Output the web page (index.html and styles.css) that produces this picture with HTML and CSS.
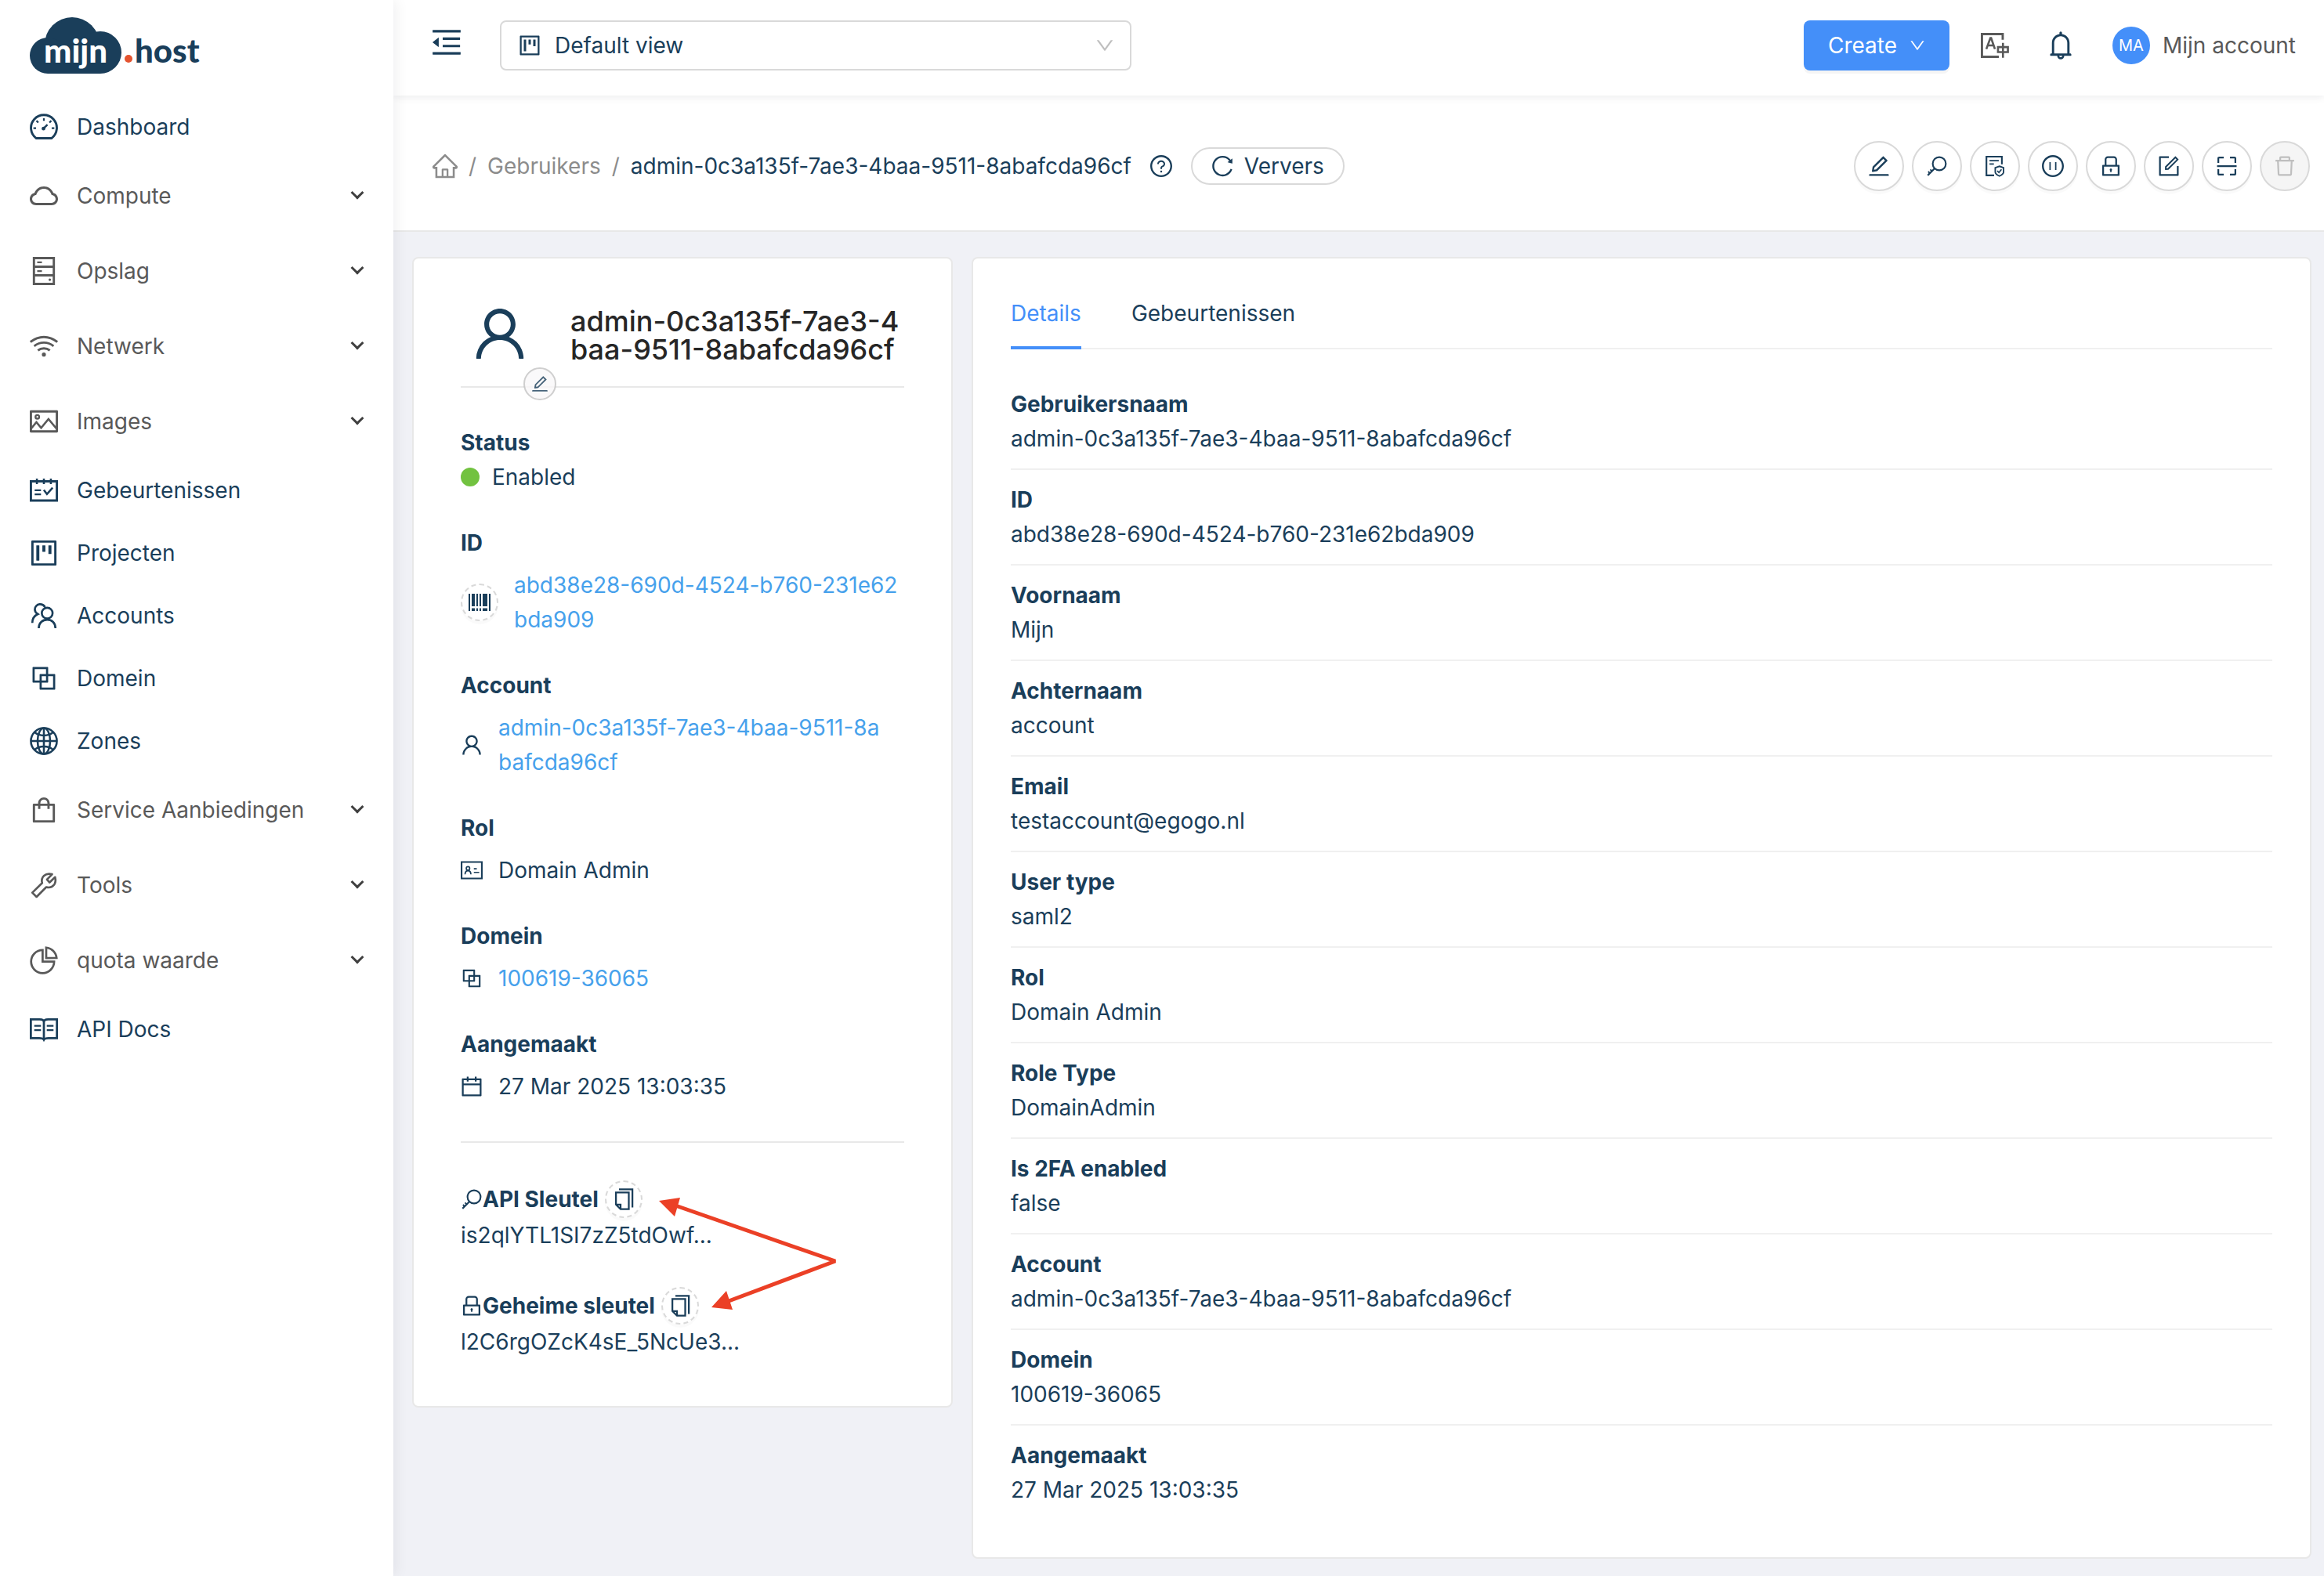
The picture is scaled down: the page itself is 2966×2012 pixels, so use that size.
FILE: index.html
```html
<!DOCTYPE html>
<html lang="nl">

<head>
    <meta charset="UTF-8">
    <meta name="viewport" content="width=device-width, initial-scale=1.0">
    <title>mijn.host - Gebruikers</title>
    <link rel="stylesheet" href="styles.css">
</head>

<body>
    <!-- icon sprite -->
    <svg class="sprite" aria-hidden="true">
        <symbol id="i-down" viewBox="64 64 896 896"><path d="M884 256h-75c-5.1 0-9.9 2.5-12.9 6.6L512 654.2 227.9 262.6c-3-4.1-7.8-6.6-12.9-6.6h-75c-6.5 0-10.3 7.4-6.5 12.7l352.6 486.1c12.8 17.6 39 17.6 51.7 0l352.6-486.1c3.9-5.3.1-12.7-6.4-12.7z"/></symbol>
        <symbol id="i-user" viewBox="64 64 896 896"><path d="M858.5 763.6a374 374 0 00-80.6-119.5 375.63 375.63 0 00-119.5-80.6c-.4-.2-.8-.3-1.2-.5C719.5 518 760 444.7 760 362c0-137-111-248-248-248S264 225 264 362c0 82.7 40.5 156 102.8 201.1-.4.2-.8.3-1.2.5-44.8 18.9-85 46-119.5 80.6a375.63 375.63 0 00-80.6 119.5A371.7 371.7 0 00136 901.8a8 8 0 008 8.2h60c4.4 0 7.9-3.5 8-7.8 2-77.2 33-149.5 87.8-204.3 56.7-56.7 132-87.9 212.2-87.9s155.5 31.2 212.2 87.9C779 752.7 810 825 812 902.2c.1 4.4 3.6 7.8 8 7.8h60a8 8 0 008-8.2c-1-47.8-10.9-94.3-29.5-138.2zM512 534c-45.9 0-89.1-17.9-121.6-50.4S340 407.9 340 362c0-45.9 17.9-89.1 50.4-121.6S466.1 190 512 190s89.1 17.9 121.6 50.4S684 316.1 684 362c0 45.9-17.9 89.1-50.4 121.6S557.9 534 512 534z"/></symbol>
        <symbol id="i-edit" viewBox="64 64 896 896"><path d="M257.7 752c2 0 4-.2 6-.5L431.9 722c2-.4 3.9-1.3 5.3-2.8l423.9-423.9a9.96 9.96 0 000-14.1L694.9 114.9c-1.9-1.9-4.4-2.9-7.1-2.9s-5.2 1-7.1 2.9L256.8 538.8c-1.5 1.5-2.4 3.3-2.8 5.3l-29.5 168.2a33.5 33.5 0 009.4 29.8c6.6 6.4 14.9 9.9 23.8 9.9zm67.4-174.4L687.8 215l73.3 73.3-362.7 362.6-88.9 15.7 15.6-89zM880 836H144c-17.7 0-32 14.3-32 32v36c0 4.4 3.6 8 8 8h784c4.4 0 8-3.6 8-8v-36c0-17.7-14.3-32-32-32z"/></symbol>
        <symbol id="i-project" viewBox="64 64 896 896"><path d="M280 752h80c4.4 0 8-3.6 8-8V280c0-4.4-3.6-8-8-8h-80c-4.4 0-8 3.6-8 8v464c0 4.4 3.6 8 8 8zm192-280h80c4.4 0 8-3.6 8-8V280c0-4.4-3.6-8-8-8h-80c-4.4 0-8 3.6-8 8v184c0 4.4 3.6 8 8 8zm192 72h80c4.4 0 8-3.6 8-8V280c0-4.4-3.6-8-8-8h-80c-4.4 0-8 3.6-8 8v256c0 4.4 3.6 8 8 8zm216-432H144c-17.7 0-32 14.3-32 32v736c0 17.7 14.3 32 32 32h736c17.7 0 32-14.3 32-32V144c0-17.7-14.3-32-32-32zm-40 728H184V184h656v656z"/></symbol>
        <symbol id="i-cloud" viewBox="64 64 896 896"><path d="M811.4 418.7C765.6 297.9 648.9 212 512.2 212S258.8 297.8 213 418.6C127.3 441.1 64 519.1 64 612c0 110.5 89.5 200 199.9 200h496.2C870.5 812 960 722.5 960 612c0-92.7-63.1-170.7-148.6-193.3zm36.3 281a123.07 123.07 0 01-87.6 36.3H263.9c-33.1 0-64.2-12.9-87.6-36.3A123.3 123.3 0 01140 612c0-28 9.1-54.3 26.2-76.3a125.7 125.7 0 0166.1-43.7l37.9-9.9 13.9-36.6c8.6-22.8 20.6-44.1 35.7-63.4a245.6 245.6 0 0152.4-49.9c41.1-28.9 89.5-44.2 140-44.2s98.9 15.3 140 44.2c19.9 14 37.5 30.8 52.4 49.9 15.1 19.3 27.1 40.7 35.7 63.4l13.8 36.5 37.8 10c54.3 14.5 92.1 63.8 92.1 120 0 33.1-12.9 64.3-36.3 87.7z"/></symbol>
        <symbol id="i-lock" viewBox="64 64 896 896"><path d="M832 464h-68V240c0-70.7-57.3-128-128-128H388c-70.7 0-128 57.3-128 128v224h-68c-17.7 0-32 14.3-32 32v384c0 17.7 14.3 32 32 32h640c17.7 0 32-14.3 32-32V496c0-17.7-14.3-32-32-32zM332 240c0-30.9 25.1-56 56-56h248c30.9 0 56 25.1 56 56v224H332V240zm460 600H232V536h560v304zM484 701v53c0 4.4 3.6 8 8 8h40c4.4 0 8-3.6 8-8v-53a48.01 48.01 0 10-56 0z"/></symbol>
        <symbol id="i-delete" viewBox="64 64 896 896"><path d="M360 184h-8c4.4 0 8-3.6 8-8v8h304v-8c0 4.4 3.6 8 8 8h-8v72h72v-80c0-35.3-28.7-64-64-64H352c-35.3 0-64 28.7-64 64v80h72v-72zm504 72H160c-17.7 0-32 14.3-32 32v32c0 4.4 3.6 8 8 8h60.4l24.7 523c1.6 34.1 29.8 61 63.9 61h454c34.2 0 62.3-26.8 63.9-61l24.7-523H888c4.4 0 8-3.6 8-8v-32c0-17.7-14.3-32-32-32zM731.3 840H292.7l-24.2-512h487l-24.2 512z"/></symbol>
        <symbol id="i-bell" viewBox="64 64 896 896"><path d="M816 768h-24V428c0-141.1-104.3-257.7-240-277.1V112c0-22.1-17.9-40-40-40s-40 17.9-40 40v38.9c-135.7 19.4-240 136-240 277.1v340h-24c-17.7 0-32 14.3-32 32v32c0 4.4 3.6 8 8 8h216c0 61.8 50.2 112 112 112s112-50.2 112-112h216c4.4 0 8-3.6 8-8v-32c0-17.7-14.3-32-32-32zM512 888c-26.5 0-48-21.5-48-48h96c0 26.5-21.5 48-48 48zM304 768V428c0-55.6 21.6-107.8 60.9-147.1S456.4 220 512 220c55.6 0 107.8 21.6 147.1 60.9S720 372.4 720 428v340H304z"/></symbol>
        <symbol id="i-home" viewBox="64 64 896 896"><path d="M946.5 505L560.1 118.8l-25.9-25.9a31.5 31.5 0 00-44.4 0L77.5 505a63.9 63.9 0 00-18.8 46c.4 35.2 29.7 63.3 64.9 63.3h42.5V940h691.8V614.3h43.4c17.1 0 33.2-6.7 45.3-18.8a63.6 63.6 0 0018.7-45.3c0-17-6.7-33.1-18.8-45.2zM568 868H456V664h112v204zm217.9-325.7V868H632V640c0-22.1-17.9-40-40-40H432c-22.1 0-40 17.9-40 40v228H238.1V542.3h-96l370-369.7 23.1 23.1L882 542.3h-96.1z"/></symbol>
        <symbol id="i-calendar" viewBox="64 64 896 896"><path d="M880 184H712v-64c0-4.4-3.6-8-8-8h-56c-4.4 0-8 3.6-8 8v64H384v-64c0-4.4-3.6-8-8-8h-56c-4.4 0-8 3.6-8 8v64H144c-17.7 0-32 14.3-32 32v664c0 17.7 14.3 32 32 32h736c17.7 0 32-14.3 32-32V216c0-17.7-14.3-32-32-32zm-40 656H184V460h656v380zM184 392V256h128v48c0 4.4 3.6 8 8 8h56c4.4 0 8-3.6 8-8v-48h256v48c0 4.4 3.6 8 8 8h56c4.4 0 8-3.6 8-8v-48h128v136H184z"/></symbol>
        <symbol id="i-block" viewBox="64 64 896 896"><path d="M856 376H648V168c0-8.8-7.2-16-16-16H168c-8.8 0-16 7.2-16 16v464c0 8.8 7.2 16 16 16h208v208c0 8.8 7.2 16 16 16h464c8.8 0 16-7.2 16-16V392c0-8.8-7.2-16-16-16zm-480 16v188H220V220h360v156H392c-8.8 0-16 7.2-16 16zm204 52v136H444V444h136zm224 360H444V648h188c8.8 0 16-7.2 16-16V444h156v360z"/></symbol>
        <symbol id="i-shopping" viewBox="64 64 896 896"><path d="M832 312H696v-16c0-101.6-82.4-184-184-184s-184 82.4-184 184v16H192c-17.7 0-32 14.3-32 32v536c0 17.7 14.3 32 32 32h640c17.7 0 32-14.3 32-32V344c0-17.7-14.3-32-32-32zm-432-16c0-61.9 50.1-112 112-112s112 50.1 112 112v16H400v-16zm392 544H232V384h96v88c0 4.4 3.6 8 8 8h56c4.4 0 8-3.6 8-8v-88h224v88c0 4.4 3.6 8 8 8h56c4.4 0 8-3.6 8-8v-88h96v456z"/></symbol>
        <symbol id="i-question" viewBox="64 64 896 896"><path d="M512 64C264.6 64 64 264.6 64 512s200.6 448 448 448 448-200.6 448-448S759.4 64 512 64zm0 820c-205.4 0-372-166.6-372-372s166.6-372 372-372 372 166.6 372 372-166.6 372-372 372z"/><path d="M623.6 316.7C593.6 290.4 554 276 512 276s-81.6 14.5-111.6 40.7C369.2 344 352 380.7 352 420v7.6c0 4.4 3.6 8 8 8h48c4.4 0 8-3.6 8-8V420c0-44.1 43.1-80 96-80s96 35.9 96 80c0 31.1-22 59.6-56.1 72.7-21.2 8.1-39.2 22.3-52.1 40.9-13.1 19-19.9 41.8-19.9 64.9V620c0 4.4 3.6 8 8 8h48c4.4 0 8-3.6 8-8v-22.7a48.3 48.3 0 0130.9-44.8c59-22.7 97.1-74.7 97.1-132.5.1-39.3-17.1-76-48.3-103.3zM472 732a40 40 0 1080 0 40 40 0 10-80 0z"/></symbol>
        <symbol id="i-pause" viewBox="64 64 896 896"><path d="M512 64C264.6 64 64 264.6 64 512s200.6 448 448 448 448-200.6 448-448S759.4 64 512 64zm0 820c-205.4 0-372-166.6-372-372s166.6-372 372-372 372 166.6 372 372-166.6 372-372 372zM368 352h56v320h-56zM600 352h56v320h-56z"/></symbol>
        <symbol id="i-reload" viewBox="64 64 896 896"><path d="M909.1 209.3l-56.4 44.1C775.8 155.1 656.2 92 521.9 92 290 92 102.3 279.5 102 511.5 101.7 743.7 289.8 932 521.9 932c181.3 0 335.8-115 394.6-276.1 1.5-4.2-.7-8.9-4.9-10.3l-56.7-19.5a8 8 0 00-10.1 4.8c-1.8 5-3.8 10-5.9 14.9-17.3 41-42.1 77.8-73.7 109.4A344.77 344.77 0 01655.9 829c-42.3 17.9-87.4 27-133.8 27-46.5 0-91.5-9.1-133.8-27A341.5 341.5 0 01279 755.2a342.16 342.16 0 01-73.7-109.4c-17.9-42.4-27-87.4-27-133.9s9.1-91.5 27-133.9c17.3-41 42.1-77.8 73.7-109.4 31.6-31.6 68.4-56.4 109.3-73.8 42.3-17.9 87.4-27 133.8-27 46.5 0 91.5 9.1 133.8 27a341.5 341.5 0 01109.3 73.8c9.9 9.9 19.2 20.4 27.8 31.4l-60.2 47a8 8 0 003 14.1l175.6 43c5 1.2 9.9-2.6 9.9-7.7l.8-180.9c-.1-6.6-7.8-10.3-13-6.2z"/></symbol>
        <symbol id="i-scan" viewBox="64 64 896 896"><path d="M136 384h56c4.4 0 8-3.6 8-8V200h176c4.4 0 8-3.6 8-8v-56c0-4.4-3.6-8-8-8H196c-37.6 0-68 30.4-68 68v180c0 4.4 3.6 8 8 8zm512-184h176v176c0 4.4 3.6 8 8 8h56c4.4 0 8-3.6 8-8V196c0-37.6-30.4-68-68-68H648c-4.4 0-8 3.6-8 8v56c0 4.4 3.6 8 8 8zM376 824H200V648c0-4.4-3.6-8-8-8h-56c-4.4 0-8 3.6-8 8v180c0 37.6 30.4 68 68 68h180c4.4 0 8-3.6 8-8v-56c0-4.4-3.6-8-8-8zm512-184h-56c-4.4 0-8 3.6-8 8v176H648c-4.4 0-8 3.6-8 8v56c0 4.4 3.6 8 8 8h180c37.6 0 68-30.4 68-68V648c0-4.4-3.6-8-8-8zm16-164H120c-4.4 0-8 3.6-8 8v56c0 4.4 3.6 8 8 8h784c4.4 0 8-3.6 8-8v-56c0-4.4-3.6-8-8-8z"/></symbol>
        <symbol id="i-form" viewBox="64 64 896 896"><path d="M904 512h-56c-4.4 0-8 3.6-8 8v320H184V184h320c4.4 0 8-3.6 8-8v-56c0-4.4-3.6-8-8-8H144c-17.7 0-32 14.3-32 32v736c0 17.7 14.3 32 32 32h736c17.7 0 32-14.3 32-32V520c0-4.4-3.6-8-8-8z"/><path d="M355.9 534.9L354 653.8c-.1 8.9 7.1 16.2 16 16.2h.4l118-2.9c2-.1 4-.9 5.4-2.3l415.9-415c3.1-3.1 3.1-8.2 0-11.3L785.4 114.3c-1.6-1.6-3.6-2.3-5.7-2.3s-4.1.8-5.7 2.3l-415.8 415a8.3 8.3 0 00-2.3 5.6zm63.5 23.6L779.7 199l45.2 45.1-360.5 359.7-45.7 1.1.7-46.4z"/></symbol>
        <symbol id="i-picture" viewBox="64 64 896 896"><path d="M928 160H96c-17.7 0-32 14.3-32 32v640c0 17.7 14.3 32 32 32h832c17.7 0 32-14.3 32-32V192c0-17.7-14.3-32-32-32zm-40 632H136v-39.9l138.5-164.3 150.1 178L658.1 489 888 761.6V792zm0-129.8L664.2 396.8c-3.2-3.8-9-3.8-12.2 0L424.6 666.4l-144-170.7c-3.2-3.8-9-3.8-12.2 0L136 652.7V232h752v430.2zM304 456a88 88 0 100-176 88 88 0 000 176zm0-116c15.5 0 28 12.5 28 28s-12.5 28-28 28-28-12.5-28-28 12.5-28 28-28z"/></symbol>
        <symbol id="i-pie" viewBox="64 64 896 896"><path d="M864 518H506V160c0-4.4-3.6-8-8-8h-26a398.46 398.46 0 00-282.8 117.1 398.19 398.19 0 00-85.7 127.1A397.61 397.61 0 0072 552a398.46 398.46 0 00117.1 282.8c36.7 36.7 79.5 65.6 127.1 85.7A397.61 397.61 0 00472 952a398.46 398.46 0 00282.8-117.1c36.7-36.7 65.6-79.5 85.7-127.1A397.61 397.61 0 00872 552v-26c0-4.4-3.6-8-8-8zM705.7 787.8A331.59 331.59 0 01470.4 884c-88.1-.4-170.9-34.9-233.2-97.2C174.5 724.1 140 640.7 140 552c0-88.7 34.5-172.1 97.2-234.8 54.6-54.6 124.9-87.9 200.8-95.5V586h364.3c-7.7 76.3-41.3 147-96.6 201.8zM952 462.4l-2.6-28.2c-8.5-92.1-49.4-179-115.2-244.6A399.4 399.4 0 00589 74.6L560.7 72c-4.7-.4-8.7 3.2-8.7 7.9V464c0 4.4 3.6 8 8 8l384-1c4.7 0 8.4-4 8-8.6zm-332.2-58.2V147.6a332.24 332.24 0 01166.4 89.8c45.7 45.6 77 103.6 90 166.1l-256.4.7z"/></symbol>
        <symbol id="i-fold" viewBox="64 64 896 896"><path d="M408 442h480c4.4 0 8-3.6 8-8v-56c0-4.4-3.6-8-8-8H408c-4.4 0-8 3.6-8 8v56c0 4.4 3.6 8 8 8zm-8 204c0 4.4 3.6 8 8 8h480c4.4 0 8-3.6 8-8v-56c0-4.4-3.6-8-8-8H408c-4.4 0-8 3.6-8 8v56zm504-486H120c-4.4 0-8 3.6-8 8v56c0 4.4 3.6 8 8 8h784c4.4 0 8-3.6 8-8v-56c0-4.4-3.6-8-8-8zm0 632H120c-4.4 0-8 3.6-8 8v56c0 4.4 3.6 8 8 8h784c4.4 0 8-3.6 8-8v-56c0-4.4-3.6-8-8-8zM115.4 518.9L271.7 642c5.8 4.6 14.4.5 14.4-6.9V388.9c0-7.4-8.5-11.5-14.4-6.9L115.4 505.1a8.74 8.74 0 000 13.8z"/></symbol>
        <symbol id="i-dashboard" viewBox="64 64 896 896"><g fill="none" stroke="currentColor" stroke-width="72"><path d="M270 874A410 410 0 1 1 754 874Z" stroke-linejoin="round"/><path d="M512 236v84M180 552h84M760 552h84M276 316l60 60M748 316l-60 60" stroke-width="56"/><path d="M505 560l120-118" stroke-width="60"/></g><circle cx="500" cy="566" r="58"/></symbol>
        <symbol id="i-hdd" viewBox="64 64 896 896"><g fill="none" stroke="currentColor" stroke-width="72"><path d="M196 100H828V924H196ZM196 374H828M196 650H828"/><path d="M300 237H450M300 512H450" stroke-width="56"/></g><circle cx="700" cy="787" r="40"/></symbol>
        <symbol id="i-wifi" viewBox="64 64 896 896"><g fill="none" stroke="currentColor" stroke-width="72"><path d="M84 376Q280 218 512 218T940 376M204 508Q340 398 512 398T820 508M322 648Q404 580 512 580T702 648"/></g><circle cx="512" cy="778" r="64"/></symbol>
        <symbol id="i-schedule" viewBox="64 64 896 896"><g fill="none" stroke="currentColor" stroke-width="72"><path d="M100 226H924V834H100Z"/><path d="M290 140V314M512 140V314M734 140V314" stroke-width="64"/><path d="M220 508H420M220 640H420" stroke-width="56"/><path d="M510 500L610 630 790 430" stroke-width="64"/></g></symbol>
        <symbol id="i-team" viewBox="64 64 896 896"><g fill="none" stroke="currentColor" stroke-width="66"><circle cx="617" cy="432" r="172"/><path d="M348 912C350 740 470 640 617 640S878 740 880 912M550 236C500 160 440 144 376 148C290 156 224 230 224 310C224 384 270 430 320 462C210 510 146 610 144 740"/></g></symbol>
        <symbol id="i-globe" viewBox="64 64 896 896"><g fill="none" stroke="currentColor" stroke-width="64"><circle cx="512" cy="512" r="412"/><ellipse cx="512" cy="512" rx="200" ry="412"/><path d="M512 100V924M100 512H924"/><path d="M220 236C370 370 654 370 804 236M220 788C370 654 654 654 804 788"/></g></symbol>
        <symbol id="i-tool" viewBox="64 64 896 896"><path d="M144 752L458 444C406 250 560 110 774 166L610 336 694 426 868 258C926 470 780 630 588 574L280 884Z" fill="none" stroke="currentColor" stroke-width="66" stroke-linejoin="round"/></symbol>
        <symbol id="i-read" viewBox="64 64 896 896"><g fill="none" stroke="currentColor" stroke-width="68"><path d="M98 196H380Q512 196 512 280 512 196 644 196H926V796H660Q540 796 512 846 484 796 364 796H98ZM512 270V830"/><path d="M206 400H420M206 540H420M604 400H818M604 540H818" stroke-width="56"/></g></symbol>
        <symbol id="i-key" viewBox="64 64 896 896"><g fill="none" stroke="currentColor" stroke-width="68"><circle cx="608" cy="416" r="268"/><path d="M420 608L136 892"/><path d="M240 650L314 724M156 736L230 810" stroke-width="60"/></g></symbol>
        <symbol id="i-audit" viewBox="64 64 896 896"><g fill="none" stroke="currentColor" stroke-width="68"><path d="M480 890H166V126H796V440"/><path d="M290 290H670M290 430H470" stroke-width="54"/><path d="M696 520L866 580V756Q866 836 696 920 526 836 526 756V580Z" stroke-width="60"/><path d="M610 710L676 776 780 650" stroke-width="54"/></g></symbol>
        <symbol id="i-translate" viewBox="64 64 896 896"><g fill="none" stroke="currentColor" stroke-width="72"><path d="M636 874H100V150H760V330"/><path d="M240 628L368 276H392L512 628M284 512H470" stroke-width="66"/><path d="M610 564H924V724H610ZM768 430V904" stroke-width="66"/></g></symbol>
        <symbol id="i-idcard" viewBox="64 64 896 896"><g fill="none" stroke="currentColor" stroke-width="68"><path d="M98 176H926V848H98Z"/><circle cx="360" cy="436" r="70" stroke-width="54"/><path d="M240 680C244 580 290 530 360 530S476 580 480 680M600 450H720M600 600H820" stroke-width="54"/></g></symbol>
        <symbol id="i-barcode" viewBox="64 64 896 896"><path d="M64 160h64v704H64zM192 160h128v512H192zM384 160h64v512h-64zM512 160h64v512h-64zM640 160h192v512H640zM896 160h64v704h-64zM192 752h128v112H192zM384 752h64v112h-64zM512 752h64v112h-64zM640 752h192v112H640z"/></symbol>
        <symbol id="i-copy" viewBox="64 64 896 896"><g fill="none" stroke="currentColor" stroke-width="72"><path d="M196 236H720V918H384L196 730ZM196 730H384V918M320 108H868V850"/></g></symbol>
    </svg>

    <div class="layout">
        <aside class="sidebar">
            <a class="logo" href="#" aria-label="mijn.host">
                <svg width="220" height="76" viewBox="0 0 220 76">
                    <g fill="#1a3e5a">
                        <circle cx="54" cy="37" r="35"/>
                        <circle cx="90" cy="47" r="27"/>
                        <circle cx="23" cy="51" r="23"/>
                        <path d="M23 40H90V74H23z"/>
                    </g>
                    <circle cx="126" cy="55" r="5" fill="#e4532f"/>
                    <text class="logo-text" x="18" y="60" fill="#fff">mijn</text>
                    <text class="logo-text" x="134" y="60" fill="#1a3e5a">host</text>
                </svg>
            </a>
            <nav class="menu">
                <a class="menu-item" href="#"><svg class="icon"><use href="#i-dashboard"/></svg>Dashboard</a>
                <button class="menu-item submenu"><svg class="icon"><use href="#i-cloud"/></svg>Compute<span class="chevron"></span></button>
                <button class="menu-item submenu"><svg class="icon"><use href="#i-hdd"/></svg>Opslag<span class="chevron"></span></button>
                <button class="menu-item submenu"><svg class="icon"><use href="#i-wifi"/></svg>Netwerk<span class="chevron"></span></button>
                <button class="menu-item submenu"><svg class="icon"><use href="#i-picture"/></svg>Images<span class="chevron"></span></button>
                <a class="menu-item" href="#"><svg class="icon"><use href="#i-schedule"/></svg>Gebeurtenissen</a>
                <a class="menu-item" href="#"><svg class="icon"><use href="#i-project"/></svg>Projecten</a>
                <a class="menu-item" href="#"><svg class="icon"><use href="#i-team"/></svg>Accounts</a>
                <a class="menu-item" href="#"><svg class="icon"><use href="#i-block"/></svg>Domein</a>
                <a class="menu-item" href="#"><svg class="icon"><use href="#i-globe"/></svg>Zones</a>
                <button class="menu-item submenu"><svg class="icon"><use href="#i-shopping"/></svg>Service Aanbiedingen<span class="chevron"></span></button>
                <button class="menu-item submenu"><svg class="icon"><use href="#i-tool"/></svg>Tools<span class="chevron"></span></button>
                <button class="menu-item submenu"><svg class="icon"><use href="#i-pie"/></svg>quota waarde<span class="chevron"></span></button>
                <a class="menu-item" href="#"><svg class="icon"><use href="#i-read"/></svg>API Docs</a>
            </nav>
        </aside>

        <div class="main">
            <header class="header">
                <button class="icon-button fold" aria-label="Menu inklappen"><svg class="icon"><use href="#i-fold"/></svg></button>
                <div class="view-select">
                    <svg class="icon"><use href="#i-project"/></svg>
                    <select aria-label="Project">
                        <option>Default view</option>
                    </select>
                    <svg class="icon arrow"><use href="#i-down"/></svg>
                </div>
                <button class="create">Create <svg class="icon"><use href="#i-down"/></svg></button>
                <div class="header-tools">
                    <button class="icon-button translate" aria-label="Taal"><svg class="icon"><use href="#i-translate"/></svg></button>
                    <button class="icon-button" aria-label="Meldingen"><svg class="icon"><use href="#i-bell"/></svg></button>
                    <button class="account"><span class="avatar">MA</span>Mijn account</button>
                </div>
            </header>

            <div class="toolbar">
                <nav class="breadcrumb">
                    <a href="#" aria-label="Home"><svg class="icon home"><use href="#i-home"/></svg></a>
                    <span>/</span>
                    <a href="#">Gebruikers</a>
                    <span>/</span>
                    <span class="current">admin-0c3a135f-7ae3-4baa-9511-8abafcda96cf</span>
                </nav>
                <a class="help" href="#" aria-label="Help"><svg class="icon"><use href="#i-question"/></svg></a>
                <button class="refresh"><svg class="icon"><use href="#i-reload"/></svg>Ververs</button>
                <div class="actions">
                    <button class="round" aria-label="Bewerken"><svg class="icon"><use href="#i-edit"/></svg></button>
                    <button class="round" aria-label="Wachtwoord wijzigen"><svg class="icon"><use href="#i-key"/></svg></button>
                    <button class="round" aria-label="Sleutels genereren"><svg class="icon"><use href="#i-audit"/></svg></button>
                    <button class="round" aria-label="Uitschakelen"><svg class="icon"><use href="#i-pause"/></svg></button>
                    <button class="round" aria-label="Vergrendelen"><svg class="icon"><use href="#i-lock"/></svg></button>
                    <button class="round" aria-label="SAML"><svg class="icon"><use href="#i-form"/></svg></button>
                    <button class="round" aria-label="2FA"><svg class="icon"><use href="#i-scan"/></svg></button>
                    <button class="round" aria-label="Verwijderen" disabled><svg class="icon"><use href="#i-delete"/></svg></button>
                </div>
            </div>

            <main class="content">
                <section class="card info">
                    <div class="info-head">
                        <svg class="icon"><use href="#i-user"/></svg>
                        <h1>admin-0c3a135f-7ae3-4baa-9511-8abafcda96cf</h1>
                        <button class="edit-badge" aria-label="Icoon wijzigen"><svg class="icon"><use href="#i-edit"/></svg></button>
                    </div>

                    <div class="info-item">
                        <h2>Status</h2>
                        <div class="info-value status"><span class="dot"></span>Enabled</div>
                    </div>
                    <div class="info-item">
                        <h2>ID</h2>
                        <div class="info-value spaced barcode">
                            <button class="dashed" aria-label="Barcode"><svg class="icon"><use href="#i-barcode"/></svg></button>
                            <a href="#">abd38e28-690d-4524-b760-231e62<wbr>bda909</a>
                        </div>
                    </div>
                    <div class="info-item">
                        <h2>Account</h2>
                        <div class="info-value spaced">
                            <svg class="icon"><use href="#i-user"/></svg>
                            <a href="#">admin-0c3a135f-7ae3-4baa-9511-8a<wbr>bafcda96cf</a>
                        </div>
                    </div>
                    <div class="info-item">
                        <h2>Rol</h2>
                        <div class="info-value spaced"><svg class="icon"><use href="#i-idcard"/></svg>Domain Admin</div>
                    </div>
                    <div class="info-item">
                        <h2>Domein</h2>
                        <div class="info-value spaced"><svg class="icon"><use href="#i-block"/></svg><a href="#">100619-36065</a></div>
                    </div>
                    <div class="info-item">
                        <h2>Aangemaakt</h2>
                        <div class="info-value spaced"><svg class="icon"><use href="#i-calendar"/></svg>27 Mar 2025 13:03:35</div>
                    </div>

                    <div class="keys">
                        <div class="key">
                            <h2><svg class="icon"><use href="#i-key"/></svg>API Sleutel <button class="dashed" aria-label="Kopieer API sleutel"><svg class="icon"><use href="#i-copy"/></svg></button></h2>
                            <p>is2qlYTL1SI7zZ5tdOwf...</p>
                        </div>
                        <div class="key">
                            <h2><svg class="icon"><use href="#i-lock"/></svg>Geheime sleutel <button class="dashed" aria-label="Kopieer geheime sleutel"><svg class="icon"><use href="#i-copy"/></svg></button></h2>
                            <p>l2C6rgOZcK4sE_5NcUe3...</p>
                        </div>
                        <!-- arrows pointing at the copy buttons -->
                        <svg class="arrows" width="240" height="150" viewBox="0 0 240 150">
                            <path d="M22 12L226 83 90 134" fill="none" stroke="#eb4026" stroke-width="5" stroke-linejoin="bevel"/>
                            <path d="M1 6L28 2 21 26zM68 142L87 121 95 145z" fill="#eb4026"/>
                        </svg>
                    </div>
                </section>

                <section class="card details">
                    <div class="tabs" role="tablist">
                        <button class="tab active" role="tab" aria-selected="true">Details</button>
                        <button class="tab" role="tab" aria-selected="false">Gebeurtenissen</button>
                    </div>
                    <dl class="detail-list">
                        <div><dt>Gebruikersnaam</dt><dd>admin-0c3a135f-7ae3-4baa-9511-8abafcda96cf</dd></div>
                        <div><dt>ID</dt><dd>abd38e28-690d-4524-b760-231e62bda909</dd></div>
                        <div><dt>Voornaam</dt><dd>Mijn</dd></div>
                        <div><dt>Achternaam</dt><dd>account</dd></div>
                        <div><dt>Email</dt><dd>testaccount@egogo.nl</dd></div>
                        <div><dt>User type</dt><dd>saml2</dd></div>
                        <div><dt>Rol</dt><dd>Domain Admin</dd></div>
                        <div><dt>Role Type</dt><dd>DomainAdmin</dd></div>
                        <div><dt>Is 2FA enabled</dt><dd>false</dd></div>
                        <div><dt>Account</dt><dd>admin-0c3a135f-7ae3-4baa-9511-8abafcda96cf</dd></div>
                        <div><dt>Domein</dt><dd>100619-36065</dd></div>
                        <div><dt>Aangemaakt</dt><dd>27 Mar 2025 13:03:35</dd></div>
                    </dl>
                </section>
            </main>
        </div>
    </div>
</body>

</html>
```

FILE: styles.css
```css
* {
    box-sizing: border-box;
}

body {
    margin: 0;
    font-family: Inter, "Liberation Sans", sans-serif;
    font-size: 28px;
    line-height: 44px;
    color: #1a3e5a;
    background-color: #f0f1f6;
}

h1,
h2,
p,
dl,
dd {
    margin: 0;
}

a {
    color: inherit;
    text-decoration: none;
}

button,
select {
    font: inherit;
    color: inherit;
    margin: 0;
    padding: 0;
    border: none;
    background: none;
    cursor: pointer;
}

.sprite {
    position: absolute;
    width: 0;
    height: 0;
}

.icon {
    display: block;
    flex: none;
    width: 28px;
    height: 28px;
    fill: currentColor;
}

.layout {
    display: flex;
    min-height: 100vh;
}

/* Sidebar */
.sidebar {
    position: relative;
    z-index: 1;
    flex: none;
    width: 502px;
    background-color: #fff;
    box-shadow: 4px 0 16px rgba(0, 21, 41, 0.06);
}

.logo {
    display: block;
    height: 122px;
    padding: 20px 38px;
}

.logo svg {
    display: block;
}

.logo-text {
    font-family: Lato, sans-serif;
    font-size: 42px;
    font-weight: 900;
}

.menu {
    display: flex;
    flex-direction: column;
}

.menu-item {
    display: flex;
    align-items: center;
    gap: 24px;
    height: 80px;
    padding: 0 38px;
    text-align: left;
}

.menu-item .icon {
    width: 36px;
    height: 36px;
}

.submenu {
    margin: 8px 0;
    color: #595959;
}

.chevron {
    width: 12px;
    height: 12px;
    margin: 0 2px 8px auto;
    border-right: 3px solid #404040;
    border-bottom: 3px solid #404040;
    transform: rotate(45deg);
}

/* Header */
.main {
    flex: 1;
    min-width: 0;
}

.header {
    position: relative;
    display: flex;
    align-items: center;
    height: 122px;
    padding: 0 36px 6px 48px;
    background-color: #fff;
    box-shadow: 0 2px 10px rgba(0, 21, 41, 0.08);
}

.icon-button .icon {
    width: 36px;
    height: 36px;
}

.fold {
    margin-right: 48px;
    padding-bottom: 8px;
}

.fold .icon {
    width: 40px;
    height: 40px;
}

.view-select {
    display: flex;
    align-items: center;
    gap: 18px;
    width: 806px;
    height: 64px;
    padding: 0 20px 0 22px;
    border: 2px solid #d9d9d9;
    border-radius: 8px;
}

.view-select select {
    flex: 1;
    appearance: none;
    outline: none;
}

.view-select .arrow {
    width: 24px;
    height: 24px;
    color: #bfbfbf;
}

.create {
    display: flex;
    align-items: center;
    justify-content: center;
    gap: 16px;
    width: 186px;
    height: 64px;
    margin-left: auto;
    margin-right: 40px;
    border-radius: 8px;
    color: #fff;
    background-color: #448ff9;
    box-shadow: 0 4px 0 rgba(0, 0, 0, 0.04);
}

.create .icon {
    width: 20px;
    height: 20px;
}

.header-tools {
    display: flex;
    align-items: center;
    gap: 48px;
}

.translate {
    color: #595959;
}

.account {
    display: flex;
    align-items: center;
    gap: 16px;
    color: #595959;
}

.avatar {
    width: 48px;
    height: 48px;
    border-radius: 50%;
    background-color: #448ff9;
    color: #fff;
    font-size: 20px;
    line-height: 48px;
    text-align: center;
}

/* Breadcrumb and actions */
.toolbar {
    display: flex;
    align-items: center;
    padding: 58px 18px 50px 50px;
    border-bottom: 2px solid #e8e8e8;
    background-color: #fff;
}

.breadcrumb {
    display: flex;
    align-items: center;
    gap: 14px;
    color: #8c8c8c;
}

.breadcrumb .home {
    width: 32px;
    height: 32px;
}

.breadcrumb .current {
    color: #1a3e5a;
}

.help {
    margin: 0 24px;
}

.refresh {
    display: flex;
    align-items: center;
    gap: 14px;
    height: 48px;
    padding: 0 24px;
    border: 2px solid #d9d9d9;
    border-radius: 24px;
}

.actions {
    display: flex;
    gap: 10px;
    margin-left: auto;
}

.round {
    display: flex;
    align-items: center;
    justify-content: center;
    width: 64px;
    height: 64px;
    border: 2px solid #d9d9d9;
    border-radius: 50%;
    background-color: #fff;
    box-shadow: 0 4px 0 rgba(0, 0, 0, 0.02);
}

.round:disabled {
    color: #bfbfbf;
    background-color: #f5f5f5;
    box-shadow: none;
    cursor: not-allowed;
}

/* Cards */
.content {
    display: grid;
    grid-template-columns: 7fr 17fr;
    align-items: start;
    padding: 32px 4px 22px 12px;
}

.card {
    min-width: 0;
    margin: 0 12px;
    border: 2px solid #e8e8e8;
    border-radius: 8px;
    background-color: #fff;
}

.info {
    padding: 58px 60px 60px;
}

.info-head {
    position: relative;
    display: flex;
    align-items: center;
    gap: 54px;
    height: 107px;
    margin-bottom: 48px;
    padding: 0 0 30px 14px;
    border-bottom: 2px solid #e8e8e8;
}

.info-head > .icon {
    width: 72px;
    height: 72px;
}

.info-head h1 {
    padding-top: 4px;
    color: #262626;
    font-size: 36px;
    font-weight: 500;
    line-height: 36px;
    word-break: break-all;
}

.edit-badge {
    position: absolute;
    left: 80px;
    bottom: -18px;
    display: flex;
    align-items: center;
    justify-content: center;
    width: 42px;
    height: 42px;
    border: 2px solid #c4c4c4;
    border-radius: 50%;
    background-color: #faf8f9;
    opacity: 0.8;
}

.edit-badge .icon {
    width: 22px;
    height: 22px;
}

.info-item {
    margin-bottom: 40px;
}

h2 {
    font-size: 28px;
    font-weight: 700;
    line-height: 44px;
}

.info-value {
    display: flex;
    align-items: center;
    gap: 20px;
}

.info-value a {
    color: #46a1ec;
}

.spaced {
    margin-top: 10px;
}

.status {
    gap: 16px;
}

.dot {
    width: 24px;
    height: 24px;
    border-radius: 50%;
    background-color: #72c240;
}

.dashed {
    display: flex;
    flex: none;
    align-items: center;
    justify-content: center;
    width: 48px;
    height: 48px;
    border: 2px dashed #d9d9d9;
    border-radius: 50%;
    background-color: #fff;
    box-shadow: 0 4px 0 rgba(0, 0, 0, 0.02);
}

.keys {
    position: relative;
    margin-top: 48px;
    padding-top: 48px;
    border-top: 2px solid #e8e8e8;
}

.key + .key {
    margin-top: 44px;
}

.key h2 {
    display: flex;
    align-items: center;
    height: 48px;
}

.key .dashed {
    margin-left: 8px;
}

.arrows {
    position: absolute;
    left: 252px;
    top: 68px;
}

/* Details */
.details {
    padding: 24px 48px 46px;
}

.tabs {
    display: flex;
    gap: 64px;
    height: 92px;
    margin-bottom: 32px;
    border-bottom: 2px solid #f0f0f0;
}

.tab {
    height: 92px;
    padding-top: 4px;
    border-bottom: 4px solid transparent;
}

.tab.active {
    color: #448ff9;
    border-bottom-color: #448ff9;
}

.detail-list > div {
    padding: 16px 0;
    border-bottom: 2px solid #f0f0f0;
}

.detail-list > div:last-child {
    border-bottom-color: transparent;
}

dt {
    font-weight: 700;
}
```
